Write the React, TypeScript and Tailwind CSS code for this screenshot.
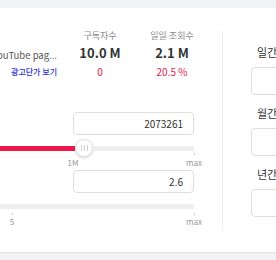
const Thumb = () => (
  <div className="w-[18px] h-[18px] shrink-0 rounded-full bg-white border border-[#e2e2e2] shadow-[0_1px_3px_rgba(0,0,0,0.18)] flex items-center justify-center gap-[2px]">
    <span className="w-px h-[6px] bg-[#d0d0d0]" />
    <span className="w-px h-[6px] bg-[#d0d0d0]" />
    <span className="w-px h-[6px] bg-[#d0d0d0]" />
  </div>
);

interface StatProps {
  label: string;
  value: string;
  change: string;
}

const Stat = ({ label, value, change }: StatProps) => (
  <div className="w-[72px] shrink-0 text-center pt-[2px]">
    <p className="text-[9px] leading-[12px] text-[#8a8a8a]">{label}</p>
    <p className="mt-[3px] text-[13px] leading-[16px] font-bold text-[#333]">{value}</p>
    <p className="mt-[4px] text-[10px] leading-[14px] text-[#e8174a]">{change}</p>
  </div>
);

const NumberBox = ({ value }: { value: string }) => (
  <div className="flex justify-end">
    <div className="w-[121px] h-[23px] border border-[#dedede] rounded-[4px] bg-white flex items-center justify-end pr-[10px] text-[10px] text-[#333]">
      {value}
    </div>
  </div>
);

const PeriodBox = ({ label, first }: { label: string; first?: boolean }) => (
  <div className={first ? '' : 'mt-[11px]'}>
    <p className="pl-[6px] text-[11px] leading-[15px] text-[#333]">{label}</p>
    <div className="mt-[7px] w-[60px] h-[28px] border border-[#dedede] rounded-[4px] bg-white" />
  </div>
);

export default function App() {
  return (
    <div className="w-[276px] h-[260px] overflow-hidden bg-[#f2f3f5] pt-[8px] font-[family-name:'Noto_Sans_CJK_KR','Noto_Sans',sans-serif]">
      <div className="h-[244px] bg-white shadow-[0_1px_2px_rgba(0,0,0,0.08)] flex">
        {/* main column, its left part lies outside the window */}
        <div className="w-[322px] shrink-0 -ml-[100px] pt-[20px] pr-[28px]">
          <div className="flex h-[67px]">
            <div className="w-[164px] shrink-0 text-right pr-[7px] pt-[20px]">
              <p className="text-[9.5px] leading-[14px] text-[#555] whitespace-nowrap">YouTube pag...</p>
              <p className="mt-[4px] text-[8px] leading-[12px] text-[#2a2fd4] font-medium">광고단가 보기</p>
            </div>
            <Stat label="구독자수" value="10.0 M" change="0" />
            <div className="w-px bg-[#ececec]" />
            <Stat label="일일 조회수" value="2.1 M" change="20.5 %" />
          </div>

          <div className="mt-[17px]">
            <NumberBox value="2073261" />
          </div>
          <div className="relative mt-[4px] h-[18px] flex items-center">
            <div className="w-[175px] h-[5px] bg-[#f0184b]" />
            <Thumb />
            <div className="flex-1 h-[5px] bg-[#eeeeee]" />
            <span className="absolute left-[294px] top-[14px] w-px h-[2px] bg-[#ccc]" />
          </div>
          <div className="relative h-[13px] text-[8px] leading-[10px] text-[#999]">
            <span className="absolute left-[173px] top-[1px] -translate-x-1/2">1M</span>
            <span className="absolute left-[294px] top-[1px] -translate-x-1/2">max</span>
          </div>

          <NumberBox value="2.6" />
          <div className="relative mt-[4px] h-[18px] flex items-center">
            <div className="w-[60px] h-[5px] bg-[#f0184b]" />
            <Thumb />
            <div className="flex-1 h-[5px] bg-[#eeeeee]" />
            <span className="absolute left-[112px] top-[16px] w-px h-[2px] bg-[#ccc]" />
            <span className="absolute left-[294px] top-[16px] w-px h-[2px] bg-[#ccc]" />
          </div>
          <div className="relative h-[13px] text-[8px] leading-[10px] text-[#999]">
            <span className="absolute left-[112px] top-[2px] -translate-x-1/2">5</span>
            <span className="absolute left-[294px] top-[2px] -translate-x-1/2">max</span>
          </div>
        </div>

        <div className="w-px h-[200px] mt-[22px] bg-[#ececec] shrink-0" />

        <div className="pl-[28px] pt-[37px]">
          <PeriodBox label="일간" first />
          <PeriodBox label="월간" />
          <PeriodBox label="년간" />
        </div>
      </div>
    </div>
  );
}
